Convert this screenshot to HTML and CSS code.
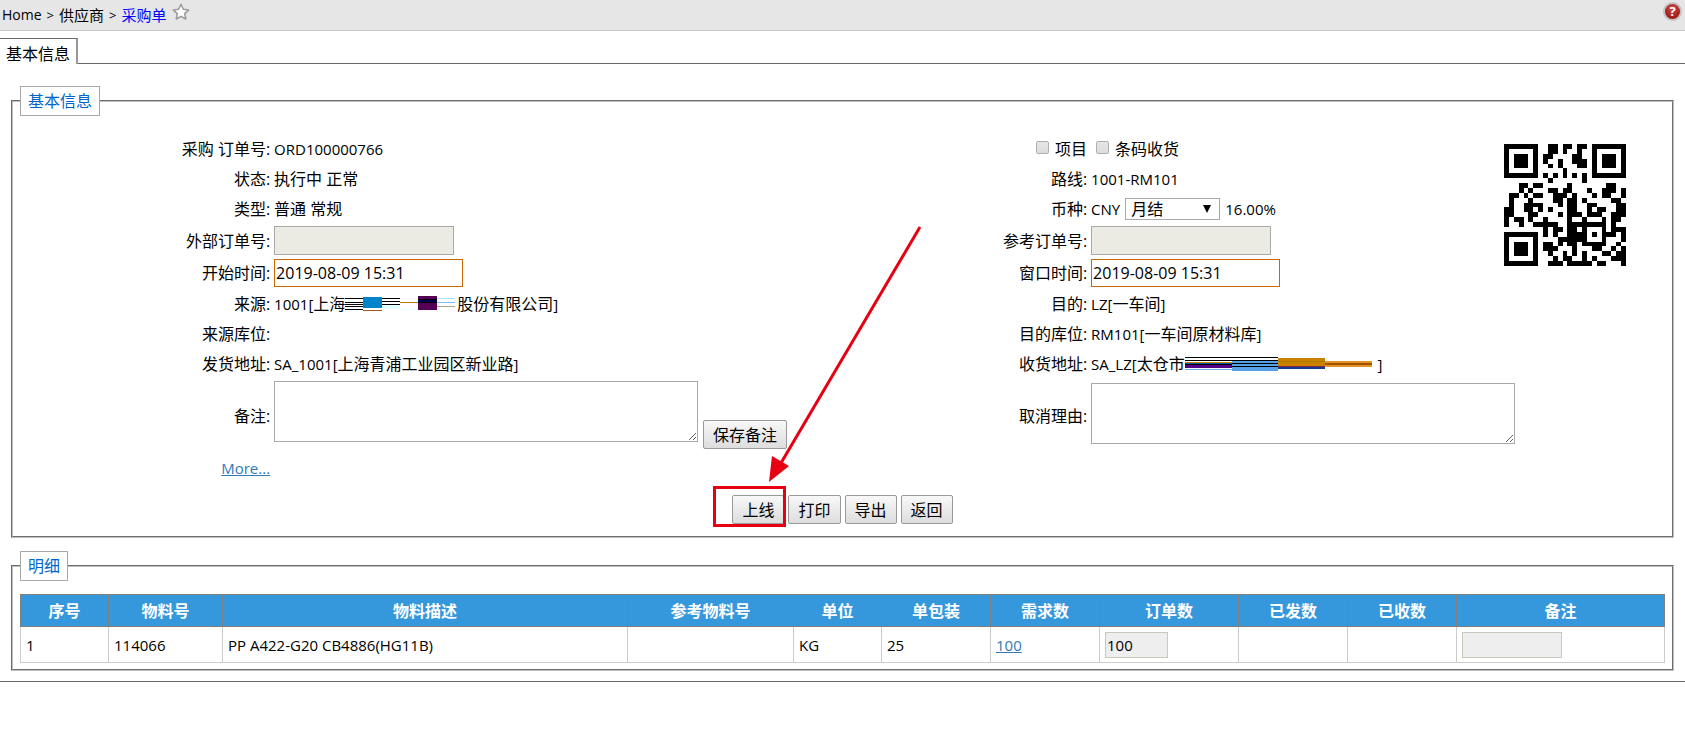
FILE: index.html
```html
<!DOCTYPE html>
<html lang="zh-CN">
<head>
<meta charset="utf-8">
<title>采购单</title>
<link rel="stylesheet" href="styles.css">
</head>
<body>
<header class="topbar">
  <nav class="crumbs">
    <span class="crumb-en">Home</span><span class="sep">&gt;</span><span>供应商</span><span class="sep">&gt;</span><a class="current" href="#">采购单</a>
    <svg class="star" viewBox="0 0 18 18" width="18" height="18"><path d="M9 1.3l2.3 5 5.4.6-4 3.7 1.1 5.4L9 13.3 4.200 16l1.100-5.400-4-3.700 5.400-.6z" fill="#fff" stroke="#999" stroke-width="1.500" stroke-linejoin="round"/></svg>
  </nav>
  <button class="help" type="button" aria-label="帮助">?</button>
</header>
<div class="tabs"><button class="tab" type="button">基本信息</button></div>
<main class="main">
  <fieldset class="panel info">
    <legend>基本信息</legend>
    <div class="form">
      <span class="label">采购 订单号:</span><span class="value en">ORD100000766</span>
      <span class="label"><input class="check" type="checkbox" id="proj"><label for="proj">项目</label></span>
      <span class="value"><input class="check shifted" type="checkbox" id="scan"><label for="scan">条码收货</label></span>

      <span class="label">状态:</span><span class="value">执行中 正常</span>
      <span class="label">路线:</span><span class="value en">1001-RM101</span>

      <span class="label">类型:</span><span class="value">普通 常规</span>
      <label class="label" for="term">币种:</label>
      <span class="value spaced"><span class="en">CNY</span><span class="pick"><select id="term"><option>月结</option></select></span><span class="en">16.00%</span></span>

      <label class="label tall" for="ext">外部订单号:</label><span class="value tall"><input class="text locked" id="ext" disabled></span>
      <label class="label tall" for="ref">参考订单号:</label><span class="value tall"><input class="text locked" id="ref" disabled></span>

      <label class="label date" for="start">开始时间:</label><span class="value date"><input class="text due" id="start" value="2019-08-09 15:31"></span>
      <label class="label date" for="end">窗口时间:</label><span class="value date"><input class="text due" id="end" value="2019-08-09 15:31"></span>

      <span class="label">来源:</span>
      <span class="value"><span class="en">1001[</span>上海<svg class="strip" width="110" height="16" shape-rendering="crispEdges">
        <path d="M0 2h18v1H0zM0 6h18v1H0zM0 8h18v1H0zM0 10h18v1H0zM0 13h18v1H0zM37 2h18v1H37zM37 5h18v1H37zM37 8h18v1H37z"/>
        <path fill="#0084cc" d="M18 1h19v11H18z"/><path fill="#a65a14" d="M18 14h19v1H18z"/>
        <path fill="#e6ffff" d="M37 9h18v4H37zM55 13h18v1H55z"/><path fill="#b9770e" d="M55 6h18v1H55z"/>
        <path fill="#550055" d="M73 0h19v14H73z"/><path fill="#000055" d="M73 4h19v3H73z"/><path d="M73 3h19v1H73zM73 6h19v1H73z"/>
        <path fill="#a5e1ff" d="M92 2h18v1H92z"/><path fill="#7dbef0" d="M92 6h18v1H92z"/><path fill="#a5a587" d="M92 10h18v1H92z"/>
      </svg><span class="after">股份有限公司<span class="en">]</span></span></span>
      <span class="label">目的:</span><span class="value"><span class="en">LZ[</span>一车间<span class="en">]</span></span>

      <span class="label">来源库位:</span><span class="value"></span>
      <span class="label">目的库位:</span><span class="value"><span class="en">RM101[</span>一车间原材料库<span class="en">]</span></span>

      <span class="label">发货地址:</span><span class="value"><span class="en">SA_1001[</span>上海青浦工业园区新业路<span class="en">]</span></span>
      <span class="label">收货地址:</span>
      <span class="value"><span class="en">SA_LZ[</span>太仓市<svg class="strip" width="187" height="16" shape-rendering="crispEdges">
        <path d="M0 1h93v1H0zM0 4h93v1H0zM0 8h47v1H0z"/>
        <path fill="#c88200" d="M0 6h47v1H0z"/><path fill="#0055a5" d="M0 7h47v1H0z"/><path fill="#550087" d="M0 9h47v3H0z"/><path fill="#64b4eb" d="M0 13h47v1H0z"/>
        <path fill="#55a0e6" d="M47 5h46v10H47z"/><path d="M47 7h46v1H47zM47 10h46v1H47z"/>
        <path fill="#c88200" d="M93 2h47v8H93z"/><path fill="#af7800" d="M93 5h47v1H93z"/><path fill="#8c2846" d="M93 10h47v1H93z"/><path fill="#0f3c91" d="M93 11h47v2H93z"/>
        <path fill="#e09628" d="M140 5h47v6h-47z"/><path fill="#a55000" d="M140 7h47v2h-47z"/>
      </svg><span class="after en">&nbsp;]</span></span>

      <label class="label area" for="memo">备注:</label>
      <span class="value area"><textarea class="memo" id="memo"></textarea><button class="btn save" type="button">保存备注</button></span>
      <label class="label area" for="cancel">取消理由:</label>
      <span class="value area mid"><textarea class="memo" id="cancel"></textarea></span>

      <span class="label more"><a class="link en" href="#">More...</a></span>
    </div>
    <svg class="qr" id="qr" viewBox="0 0 25 25" shape-rendering="crispEdges"></svg>
    <div class="actions">
      <span class="marked"><button class="btn" type="button">上线</button></span>
      <button class="btn" type="button">打印</button>
      <button class="btn" type="button">导出</button>
      <button class="btn" type="button">返回</button>
      <svg class="arrow" viewBox="0 0 156 260" width="156" height="260"><path d="M152 2L13 238" stroke="#e60012" stroke-width="3"/><path d="M1 257L4 231 21 241z" fill="#e60012"/></svg>
    </div>
  </fieldset>
  <fieldset class="panel details">
    <legend>明细</legend>
    <table class="grid">
      <colgroup><col class="c88"><col class="c114"><col><col class="c166"><col class="c88"><col class="c109"><col class="c109"><col class="c139"><col class="c109"><col class="c109"><col class="c208"></colgroup>
      <thead><tr><th>序号</th><th>物料号</th><th>物料描述</th><th>参考物料号</th><th>单位</th><th>单包装</th><th>需求数</th><th>订单数</th><th>已发数</th><th>已收数</th><th>备注</th></tr></thead>
      <tbody><tr><td>1</td><td>114066</td><td>PP A422-G20 CB4886(HG11B)</td><td></td><td>KG</td><td>25</td><td><a class="link" href="#">100</a></td>
        <td><input class="cell" aria-label="订单数" value="100" readonly></td><td></td><td></td><td><input class="cell wide" aria-label="备注" readonly></td></tr></tbody>
    </table>
  </fieldset>
</main>
<script src="qr.js"></script>
</body>
</html>
```

FILE: styles.css
```css
* { box-sizing: border-box; }
body {
  margin: 0;
  background: #fff;
  color: #000;
  font: 16px/30px "Open Sans", "Noto Sans CJK SC", sans-serif;
}
button, input, select, textarea { font: inherit; color: inherit; }
.en { font-size: 15px; }

.topbar {
  display: flex;
  justify-content: space-between;
  height: 31px;
  padding: 0 3px 0 2px;
  background: #e6e6e6;
  border-bottom: 1px solid #c8c8c8;
}
.crumbs { display: flex; font-size: 15px; }
.crumb-en { font-size: 14px; }
.sep { margin: 0 5px; font-size: 13px; }
.current { color: #00f; text-decoration: none; }
.star { margin: 3px 0 0 6px; }
.help {
  width: 19px;
  height: 19px;
  margin-top: 2px;
  padding: 0;
  border: 2px solid #c3c3c3;
  border-radius: 50%;
  background: radial-gradient(circle at 50% 30%, #d04a4a, #a01818 75%);
  color: #fff;
  font-size: 13px;
  font-weight: 700;
  line-height: 15px;
}

.tabs {
  display: flex;
  height: 33px;
  padding-top: 7px;
  border-bottom: 1px solid #696969;
}
.tab {
  height: 26px;
  padding: 0 6px;
  background: #fff;
  border: 1px solid #696969;
  border-width: 1px 2px 0 0;
  border-right-color: #999;
  line-height: 30px;
}

.main { padding: 22px 11px 10px; border-bottom: 1px solid #696969; }
.panel {
  position: relative;
  min-width: 0;
  margin: 0;
  padding: 0 7px;
  border: 2px groove #c0c0c0;
}
.info { margin-bottom: 13px; padding-bottom: 12px; }
.details { padding-bottom: 6px; }
.panel legend {
  padding: 0 7px;
  border: 1px solid #a9a9a9;
  color: #0066cc;
  line-height: 28px;
}

.form {
  display: grid;
  grid-template-columns: 15fr 35fr 15fr 35fr;
  padding: 18px 4px 0 7px;
}
.label, .value { display: flex; align-items: center; min-height: 30px; white-space: nowrap; }
.label { justify-content: flex-end; padding-right: 2px; }
.value { padding-left: 2px; }
.tall { min-height: 33px; }
.date { min-height: 32px; }
.area { min-height: 74px; }
.spaced { gap: 5px; }
.text {
  width: 180px;
  height: 29px;
  padding: 0 1px;
  border: 1px solid #a9a9a9;
}
.locked { background: #ebebe4; }
.due { width: 189px; height: 28px; border-color: #cc6600; }
.check {
  appearance: none;
  width: 13px;
  height: 13px;
  margin: 0 6px 4px 0;
  border: 1px solid #b0b0b0;
  border-radius: 2px;
  background: linear-gradient(#e6e6e6, #dcdcdc);
}
.shifted { margin-left: 5px; }
.pick { position: relative; display: flex; }
.pick select {
  appearance: none;
  width: 95px;
  height: 22px;
  padding: 0 5px;
  border: 1px solid #a9a9a9;
  background: #fff;
  line-height: 20px;
}
.pick::after {
  content: "";
  position: absolute;
  top: 7px;
  right: 9px;
  border: solid transparent;
  border-width: 8px 4px 0;
  border-top-color: #000;
  pointer-events: none;
}
.strip { flex: none; }
.after { margin-left: 2px; }
.memo {
  width: 424px;
  height: 61px;
  border: 1px solid #a9a9a9;
  background: #fff;
}
.value.area { align-items: flex-start; gap: 5px; padding-top: 2px; }
.value.mid { padding-top: 4px; }
.save { margin-top: 39px; }
.link { color: #337ab7; text-decoration: underline; }

.qr { position: absolute; top: 28px; right: 46px; width: 122px; height: 122px; }

.btn {
  height: 29px;
  padding: 0 9px;
  border: 1px solid #999;
  border-radius: 2px;
  background: linear-gradient(#f8f8f8, #ddd);
  line-height: 29px;
}
.actions {
  position: relative;
  display: flex;
  justify-content: center;
  gap: 4px;
  width: fit-content;
  margin: 12px auto 0;
}
.marked { position: relative; display: flex; }
.marked::after {
  content: "";
  position: absolute;
  inset: -9px -2px -3px -19px;
  border: 3px solid #e60012;
}
.arrow { position: absolute; left: 36px; bottom: 39px; fill: none; pointer-events: none; }

.grid {
  width: 100%;
  margin-top: 13px;
  border-collapse: collapse;
  table-layout: fixed;
  font-size: 15px;
}
.grid th {
  height: 32px;
  padding: 0;
  border: 1px solid #808080;
  background: #3598dc;
  color: #fff;
  font-size: 16px;
}
.grid td { height: 36px; padding: 0 5px; border: 1px solid #ccc; }
.c88 { width: 88px; }
.c109 { width: 109px; }
.c114 { width: 114px; }
.c139 { width: 139px; }
.c166 { width: 166px; }
.c208 { width: 208px; }
.cell {
  display: block;
  width: 63px;
  height: 26px;
  padding: 0 1px;
  border: 1px solid #c8c8bc;
  background: #eee;
}
.wide { width: 100px; }
```

FILE: qr.js
```javascript
// Version 2 QR code, error correction level H, byte mode, mask 6.
function qr(text) {
  var N = 25, DATA = 16, EC = 28, MASK = 6, bits = [];
  function put(v, n) { for (var i = n - 1; i >= 0; i--) bits.push((v >> i) & 1); }
  put(4, 4);
  put(text.length, 8);
  for (var j = 0; j < text.length; j++) put(text.charCodeAt(j), 8);
  put(0, Math.min(4, DATA * 8 - bits.length));
  while (bits.length % 8) bits.push(0);
  var d = [];
  for (var k = 0; k < bits.length; k += 8) d.push(parseInt(bits.slice(k, k + 8).join(''), 2));
  for (var p = 0; d.length < DATA; p++) d.push(p % 2 ? 17 : 236);

  function mul(a, b) {
    var z = 0;
    for (var i = 7; i >= 0; i--) { z = (z << 1) ^ ((z >> 7) * 0x11d); z ^= ((b >> i) & 1) * a; }
    return z;
  }
  var g = Array(EC).fill(0);
  g[EC - 1] = 1;
  for (var r = 1, t = 0; t < EC; t++) {
    for (var u = 0; u < EC; u++) { g[u] = mul(g[u], r); if (u + 1 < EC) g[u] ^= g[u + 1]; }
    r = mul(r, 2);
  }
  var rem = Array(EC).fill(0);
  d.forEach(function (b) {
    var f = b ^ rem.shift();
    rem.push(0);
    g.forEach(function (c, i) { rem[i] ^= mul(c, f); });
  });
  var all = d.concat(rem), m = [], fixed = [], x, y, i;
  for (y = 0; y < N; y++) { m.push(Array(N).fill(0)); fixed.push(Array(N).fill(0)); }
  function set(x, y, v) { m[y][x] = v ? 1 : 0; fixed[y][x] = 1; }

  // Timing, finder and alignment patterns
  for (i = 0; i < N; i++) { set(6, i, i % 2 === 0); set(i, 6, i % 2 === 0); }
  [[3, 3], [N - 4, 3], [3, N - 4]].forEach(function (c) {
    for (var a = -4; a <= 4; a++) for (var b = -4; b <= 4; b++) {
      var px = c[0] + a, py = c[1] + b, e = Math.max(Math.abs(a), Math.abs(b));
      if (px >= 0 && px < N && py >= 0 && py < N) set(px, py, e !== 2 && e !== 4);
    }
  });
  for (var a = -2; a <= 2; a++) for (var b = -2; b <= 2; b++) set(18 + a, 18 + b, Math.max(Math.abs(a), Math.abs(b)) !== 1);

  // Format information
  var fd = (2 << 3) | MASK, rm = fd;
  for (i = 0; i < 10; i++) rm = (rm << 1) ^ ((rm >> 9) * 0x537);
  var F = ((fd << 10) | rm) ^ 0x5412;
  function bit(i) { return (F >> i) & 1; }
  for (i = 0; i <= 5; i++) set(8, i, bit(i));
  set(8, 7, bit(6)); set(8, 8, bit(7)); set(7, 8, bit(8));
  for (i = 9; i < 15; i++) set(14 - i, 8, bit(i));
  for (i = 0; i < 8; i++) set(N - 1 - i, 8, bit(i));
  for (i = 8; i < 15; i++) set(8, N - 15 + i, bit(i));
  set(8, N - 8, 1);

  // Data in the zigzag scan, then the mask
  var n = 0;
  for (var R = N - 1; R >= 1; R -= 2) {
    if (R === 6) R = 5;
    for (var v = 0; v < N; v++) for (j = 0; j < 2; j++) {
      x = R - j;
      y = ((R + 1) & 2) === 0 ? N - 1 - v : v;
      if (!fixed[y][x]) { m[y][x] = n < all.length * 8 ? (all[n >> 3] >> (7 - (n & 7))) & 1 : 0; n++; }
    }
  }
  for (y = 0; y < N; y++) for (x = 0; x < N; x++) {
    if (!fixed[y][x] && (x * y % 2 + x * y % 3) % 2 === 0) m[y][x] ^= 1;
  }
  return m;
}

var path = '';
qr('ORD100000766').forEach(function (row, y) {
  row.forEach(function (v, x) { if (v) path += 'M' + x + ' ' + y + 'h1v1h-1z'; });
});
document.getElementById('qr').innerHTML = '<path d="' + path + '"/>';
```
